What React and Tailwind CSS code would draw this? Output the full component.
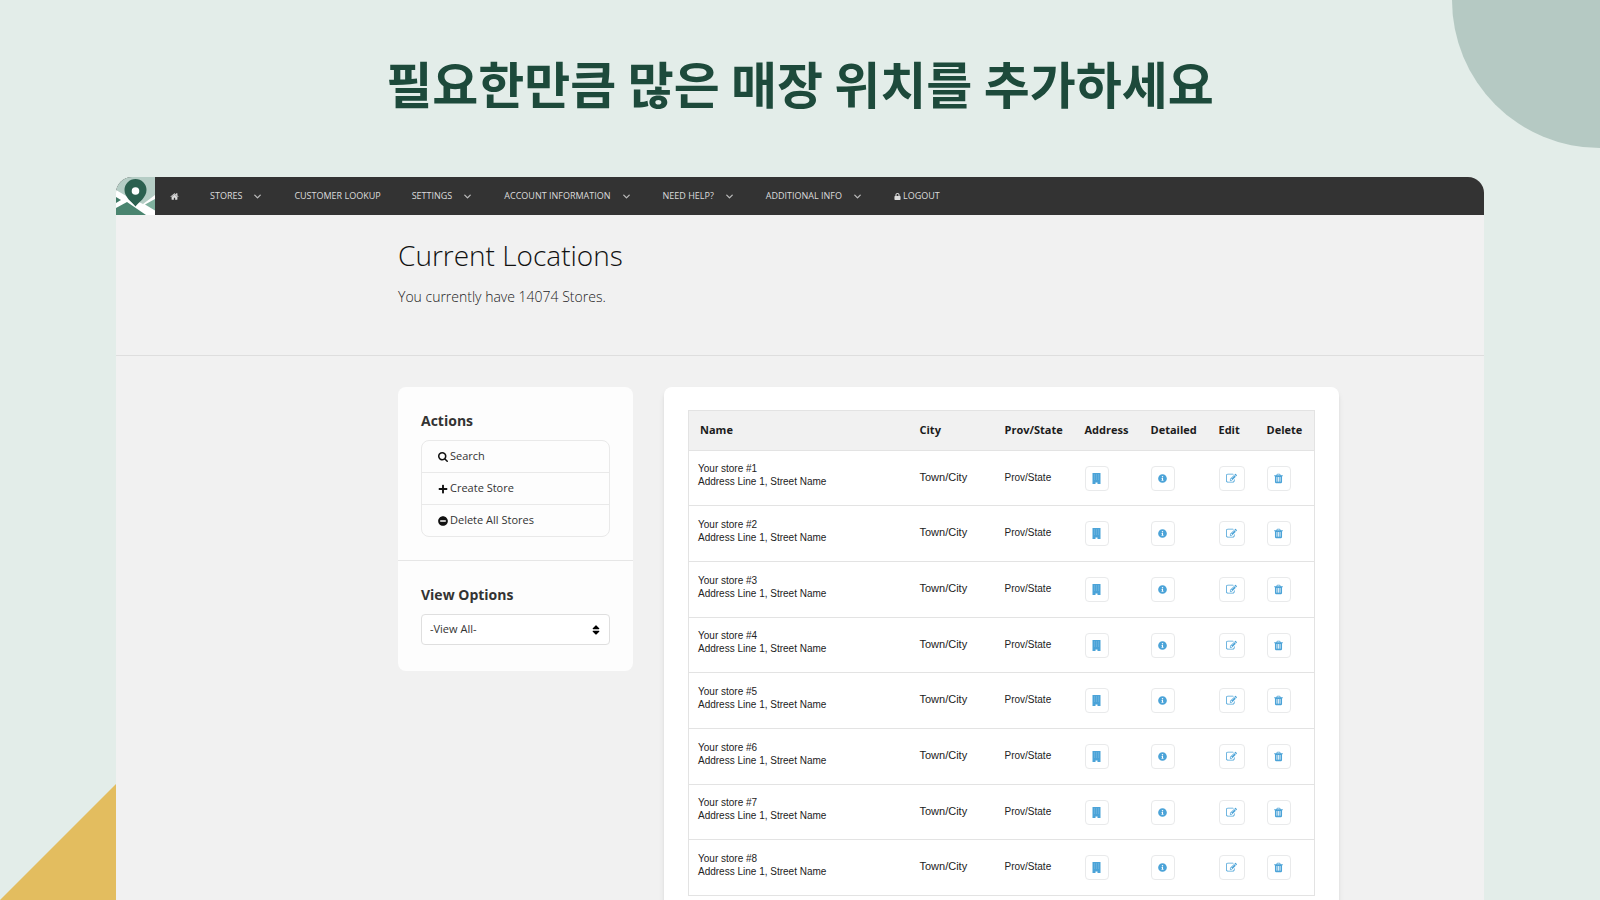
import React, { useState } from "react";
import { FaInfoCircle, FaLock, FaMinusCircle, FaPlus, FaSort } from "react-icons/fa";
import { FiChevronDown } from "react-icons/fi";

const menu = [
  { label: "STORES", dropdown: true },
  { label: "CUSTOMER LOOKUP" },
  { label: "SETTINGS", dropdown: true },
  { label: "ACCOUNT INFORMATION", dropdown: true },
  { label: "NEED HELP?", dropdown: true },
  { label: "ADDITIONAL INFO", dropdown: true },
];

const actions = [
  { label: "Search", icon: SearchIcon },
  { label: "Create Store", icon: FaPlus },
  { label: "Delete All Stores", icon: FaMinusCircle },
];

const stores = [1, 2, 3, 4, 5, 6, 7, 8].map((id) => ({
  id,
  name: `Your store #${id}`,
  address: "Address Line 1, Street Name",
  city: "Town/City",
  state: "Prov/State",
}));

function HomeIcon({ className }) {
  return (
    <svg viewBox="0 0 1792 1792" fill="currentColor" className={className}>
      <path d="M1472 992v480q0 26-19 45t-45 19h-384v-384h-256v384h-384q-26 0-45-19t-19-45v-480q0-1 .5-3t.5-3l575-474 575 474q1 2 1 6zm223-69l-62 74q-8 9-21 11h-3q-13 0-21-7l-692-577-692 577q-12 8-24 7-13-2-21-11l-62-74q-8-10-7-23.5t11-21.5l719-599q32-26 76-26t76 26l244 204v-195q0-14 9-23t23-9h192q14 0 23 9t9 23v408l219 182q10 8 11 21.5t-7 23.5z" />
    </svg>
  );
}

function SearchIcon({ className }) {
  return (
    <svg viewBox="64 128 1664 1664" fill="currentColor" className={className}>
      <path d="M1216 832q0-185-131.5-316.5t-316.5-131.5-316.5 131.5-131.5 316.5 131.5 316.5 316.5 131.5 316.5-131.5 131.5-316.5zm512 832q0 52-38 90t-90 38q-54 0-90-38l-343-342q-179 124-399 124-143 0-273.5-55.5t-225-150-150-225-55.5-273.5 55.5-273.5 150-225 225-150 273.5-55.5 273.5 55.5 225 150 150 225 55.5 273.5q0 220-124 399l343 343q37 37 37 90z" />
    </svg>
  );
}

function BuildingIcon({ className }) {
  return (
    <svg viewBox="0 0 11 11" fill="currentColor" className={className}>
      <path d="M1.5 0H9.5V11H6.5V9.500H4.500V11H1.5Z" />
      <path d="M3 2H8M3 4H8M3 6H8" stroke="#fff" strokeWidth="0.8" strokeDasharray="1 1" opacity="0.35" />
    </svg>
  );
}

function EditIcon({ className }) {
  return (
    <svg viewBox="0 0 1792 1792" fill="currentColor" className={className}>
      <path d="M888 1184l116-116-152-152-116 116v56h96v96h56zm440-720q-16-16-33 1l-350 350q-17 17-1 33t33-1l350-350q17-17 1-33zm80 594v190q0 119-84.5 203.5t-203.5 84.5h-832q-119 0-203.5-84.5t-84.5-203.5v-832q0-119 84.5-203.5t203.5-84.5h832q63 0 117 25 15 7 18 23 3 17-9 29l-49 49q-14 14-32 8-23-6-45-6h-832q-66 0-113 47t-47 113v832q0 66 47 113t113 47h832q66 0 113-47t47-113v-126q0-13 9-22l64-64q15-15 35-7t20 29zm-96-738l288 288-672 672h-288v-288zm444 132l-92 92-288-288 92-92q28-28 68-28t68 28l152 152q28 28 28 68t-28 68z" />
    </svg>
  );
}

function TrashIcon({ className }) {
  return (
    <svg viewBox="0 0 1792 1792" fill="currentColor" className={className}>
      <path d="M704 1376v-704q0-14-9-23t-23-9h-64q-14 0-23 9t-9 23v704q0 14 9 23t23 9h64q14 0 23-9t9-23zm256 0v-704q0-14-9-23t-23-9h-64q-14 0-23 9t-9 23v704q0 14 9 23t23 9h64q14 0 23-9t9-23zm256 0v-704q0-14-9-23t-23-9h-64q-14 0-23 9t-9 23v704q0 14 9 23t23 9h64q14 0 23-9t9-23zm-544-992h448l-48-117q-7-9-17-11h-317q-10 2-17 11zm928 32v64q0 14-9 23t-23 9h-96v948q0 83-47 143.5t-113 60.5h-832q-66 0-113-58.5t-47-141.5v-952h-96q-14 0-23-9t-9-23v-64q0-14 9-23t23-9h309l70-167q15-37 54-63t79-26h320q40 0 79 26t54 63l70 167h309q14 0 23 9t9 23z" />
    </svg>
  );
}

function Logo() {
  return (
    <svg viewBox="0 0 39 38" className="h-[38px] w-[39px] shrink-0">
      <rect width="39" height="38" fill="#b5cdc5" />
      <path d="M0 13 L12 20 L27 27 L39 18 V38 H0Z" fill="#fff" />
      <path d="M39 22 L29 27.5 L39 33.5Z" fill="#7fb09e" />
      <path d="M0 20 L5 23 L0 26Z" fill="#3f7a66" />
      <path d="M0 31 L11 25 L30 38 H0Z" fill="#4a846f" />
      <path d="M19.5 29.5 C16 25 8.5 20.5 8.5 13 A11 11 0 0 1 30.5 13 C30.5 20.5 23 25 19.5 29.5Z" fill="#2b604f" />
      <circle cx="19.5" cy="14" r="3.8" fill="#fff" />
    </svg>
  );
}

function Navbar() {
  return (
    <nav className="flex h-[38px] items-center bg-[#333] text-[9px] font-medium text-[#dcdcdc]">
      <a href="#" aria-label="Store locator"><Logo /></a>
      <a href="#" aria-label="Home" className="ml-[15px]">
        <HomeIcon className="size-[9px]" />
      </a>
      {menu.map((item) => (
        <a key={item.label} href="#" className="ml-[31px] flex items-center whitespace-nowrap">
          {item.label}
          {item.dropdown && <FiChevronDown strokeWidth={3} className="ml-2.5 size-[11px] text-[#b8b8b8]" />}
        </a>
      ))}
      <a href="#" className="ml-[31px] flex items-center gap-0.5">
        <FaLock className="size-[7px]" />
        LOGOUT
      </a>
    </nav>
  );
}

function Sidebar() {
  const [view, setView] = useState("all");

  return (
    <aside className="w-[235px] shrink-0 rounded-lg bg-[#fdfdfd] text-[#333]">
      <div className="border-b border-[#e6e6e6] px-[23px] pt-6 pb-[23px]">
        <h2 className="text-sm leading-5 font-bold">Actions</h2>
        <ul className="mt-[9px] divide-y divide-[#e9e9e9] rounded-lg border border-[#e9e9e9]">
          {actions.map(({ label, icon: Icon }) => (
            <li key={label}>
              <a href="#" className="flex h-[31px] items-center gap-0.5 pl-4 text-[11px]">
                <Icon className="size-2.5 text-[#111]" />
                {label}
              </a>
            </li>
          ))}
        </ul>
      </div>
      <div className="px-[23px] pt-6 pb-[26px]">
        <label htmlFor="view" className="block text-sm leading-5 font-bold">View Options</label>
        <div className="relative mt-[9px]">
          <select
            id="view"
            value={view}
            onChange={(e) => setView(e.target.value)}
            className="h-[31px] w-full appearance-none rounded border border-[#dfdfdf] bg-white pl-2 text-[11px]"
          >
            <option value="all">-View All-</option>
          </select>
          <FaSort className="pointer-events-none absolute top-2.5 right-2 size-3 text-black" />
        </div>
      </div>
    </aside>
  );
}

function IconButton({ label, icon: Icon, wide }) {
  return (
    <button
      aria-label={label}
      className={`flex h-[25px] items-center justify-center rounded border border-[#e9eaeb] text-[#4ba3d8] ${wide ? "w-[26px]" : "w-[24px]"}`}
    >
      <Icon className="size-[11px]" />
    </button>
  );
}

function InfoIcon() {
  return <FaInfoCircle className="size-[9px]" />;
}

function StoreTable() {
  return (
    <table className="w-full table-fixed border-collapse border border-[#e3e3e3] text-left text-[#222]">
      <colgroup>
        <col />
        <col className="w-[85px]" />
        <col className="w-[80px]" />
        <col className="w-[66px]" />
        <col className="w-[68px]" />
        <col className="w-[48px]" />
        <col className="w-[48px]" />
      </colgroup>
      <thead>
        <tr className="h-10 bg-[#f1f1f1] text-[11px] text-[#1c1c1c]">
          <th className="pl-[11px]">Name</th>
          <th>City</th>
          <th>Prov/State</th>
          <th>Address</th>
          <th>Detailed</th>
          <th>Edit</th>
          <th>Delete</th>
        </tr>
      </thead>
      <tbody className="font-['Liberation_Sans',Arial,sans-serif]">
        {stores.map((store) => (
          <tr key={store.id} className="h-14 border-t border-[#e3e3e3] nth-[3n+1]:h-[55px]">
            <td className="pb-1.5 pl-[9px] text-[10px] leading-[13px]">
              {store.name}
              <br />
              {store.address}
            </td>
            <td className="pb-0.5 text-[11px]">{store.city}</td>
            <td className="pb-0.5 text-[10px]">{store.state}</td>
            <td><IconButton label="Address" icon={BuildingIcon} /></td>
            <td><IconButton label="Detailed" icon={InfoIcon} /></td>
            <td><IconButton label="Edit" icon={EditIcon} wide /></td>
            <td><IconButton label="Delete" icon={TrashIcon} /></td>
          </tr>
        ))}
      </tbody>
    </table>
  );
}

export default function App() {
  return (
    <div className="relative flex h-screen flex-col overflow-hidden bg-[#e3ede9] font-['Open_Sans',sans-serif]">
      <div className="absolute top-0 right-0 size-[148px] rounded-bl-full bg-[#b5c9c3]" />
      <svg viewBox="0 0 116 116" className="absolute bottom-0 left-0 size-[116px]">
        <path d="M0 116 L116 0 V116Z" fill="#e3bd5f" />
      </svg>

      <h1 className="shrink-0 pt-[46px] pb-[59px] text-center font-['Noto_Sans_CJK_KR',sans-serif] text-[50px] leading-[72px] font-bold text-[#1d4a3b]">
        필요한만큼 많은 매장 위치를 추가하세요
      </h1>

      <div className="relative mx-[116px] grow overflow-hidden rounded-t-2xl bg-[#f1f1f1]">
        <Navbar />
        <header className="h-[141px] border-b border-[#dedede] pt-5 pl-[282px] font-light">
          <h2 className="text-[28px] leading-10 text-[#111]">Current Locations</h2>
          <p className="mt-2.5 text-sm leading-6 text-[#222]">You currently have 14074 Stores.</p>
        </header>
        <main className="flex items-start gap-[31px] pt-[31px] pr-[145px] pl-[282px]">
          <Sidebar />
          <section className="grow rounded-lg bg-white px-6 pt-[23px] pb-6 shadow-md">
            <StoreTable />
          </section>
        </main>
      </div>
    </div>
  );
}
